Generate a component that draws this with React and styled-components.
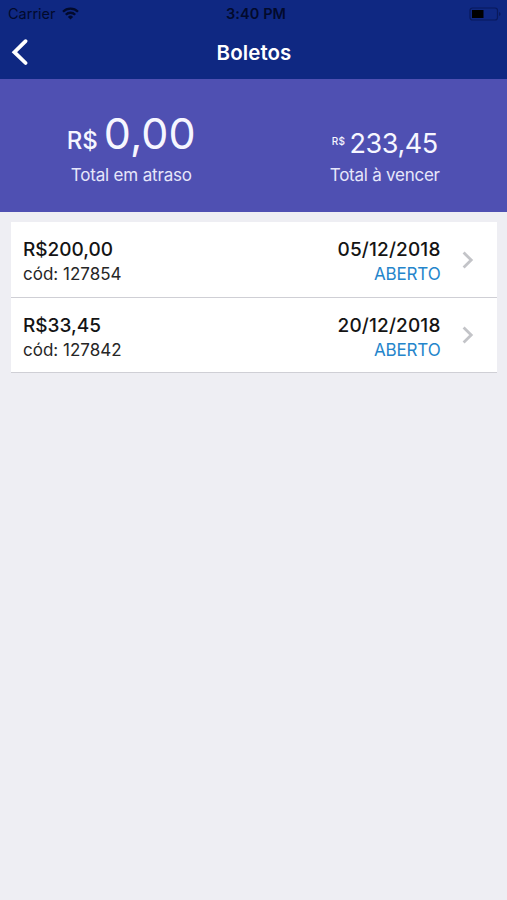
import React from "react";
import styled, { createGlobalStyle } from "styled-components";

const boletos = [
  { id: 1, valor: "R$200,00", codigo: "127854", data: "05/12/2018", status: "ABERTO" },
  { id: 2, valor: "R$33,45", codigo: "127842", data: "20/12/2018", status: "ABERTO" },
];

const App = () => {
  return (
    <Screen>
      <GlobalStyle />
      <Header>
        <StatusBar>
          <Carrier>
            <span>Carrier</span>
            <svg width="17" height="13" viewBox="0 0 17 13">
              <g fill="none" stroke="#020a2c" strokeWidth="2.3">
                <path d="M1 4.7a10.7 10.7 0 0 1 15 0" />
                <path d="M3.8 7.7a6.7 6.7 0 0 1 9.4 0" />
              </g>
              <path d="M8.5 12.5 5.9 9.9a3.7 3.7 0 0 1 5.2 0z" fill="#020a2c" />
            </svg>
          </Carrier>
          <Time>3:40 PM</Time>
          <Battery>
            <svg width="32" height="14" viewBox="0 0 32 14">
              <rect x="1" y="1" width="27.5" height="12" rx="2.5" fill="none" stroke="#09195c" strokeWidth="1.2" />
              <rect x="3" y="3" width="11.5" height="8" fill="#000" />
              <path d="M30 5v4q1.6-.6 1.6-2T30 5z" fill="#09195c" />
            </svg>
          </Battery>
        </StatusBar>
        <NavBar>
          <Back aria-label="Voltar">
            <svg width="18" height="28" viewBox="0 0 18 28">
              <path d="M14.6 3.2 3.4 14.2 14.6 25" fill="none" stroke="#fff" strokeWidth="3.8" strokeLinecap="round" strokeLinejoin="miter" />
            </svg>
          </Back>
          <Title>Boletos</Title>
        </NavBar>
      </Header>
      <Summary>
        <Total>
          <Amount $top="1px">
            <Currency>R$</Currency>
            <Value $size="43px" $weight="390" $spacing="0.1px">0,00</Value>
          </Amount>
          <Label $spacing="-0.17px">Total em atraso</Label>
        </Total>
        <Total>
          <Amount $top="21px">
            <SmallCurrency>R$</SmallCurrency>
            <Value $size="27px" $weight="370" $spacing="-0.4px">233,45</Value>
          </Amount>
          <Label $spacing="-0.25px">Total à vencer</Label>
        </Total>
      </Summary>
      <List>
        {boletos.map((boleto) => (
          <Row key={boleto.id}>
            <Column>
              <Strong $spacing="0px">{boleto.valor}</Strong>
              <Small>cód: {boleto.codigo}</Small>
            </Column>
            <Column $right>
              <Strong $spacing="0.15px">{boleto.data}</Strong>
              <Small $status>{boleto.status}</Small>
            </Column>
            <Arrow width="12" height="18" viewBox="0 0 12 18">
              <path d="M1.6 1.6 9.2 9l-7.6 7.4" fill="none" stroke="#c3c4c8" strokeWidth="2.8" />
            </Arrow>
          </Row>
        ))}
      </List>
    </Screen>
  );
};

const GlobalStyle = createGlobalStyle`
  * {
    box-sizing: border-box;
  }
  body {
    margin: 0;
    background: #eeeef3;
    font-family: Inter, "Liberation Sans", sans-serif;
  }
`;

const Screen = styled.main`
  min-height: 100vh;
  background: #eeeef3;
`;

const Header = styled.header`
  height: 79px;
  background: #0f2882;
`;

const StatusBar = styled.div`
  display: grid;
  grid-template-columns: 1fr auto 1fr;
  align-items: center;
  height: 27px;
  padding: 0 5px 0 8px;
  color: #020a2c;
  font-size: 14.5px;
  line-height: 27px;
`;

const Carrier = styled.div`
  display: flex;
  align-items: center;
  gap: 6px;
`;

const Time = styled.div`
  padding-left: 2px;
  font-weight: 600;
  font-size: 14.5px;
  letter-spacing: 0.1px;
`;

const Battery = styled.div`
  display: flex;
  justify-content: flex-end;
  padding-right: 1px;
`;

const NavBar = styled.nav`
  display: grid;
  grid-template-columns: 60px 1fr 60px;
  align-items: center;
  height: 50px;
`;

const Back = styled.button`
  display: flex;
  width: 40px;
  padding: 0 0 0 11px;
  border: 0;
  background: none;
`;

const Title = styled.h1`
  margin: 0;
  padding: 1px 0 0 1px;
  color: #fff;
  font-size: 20.5px;
  font-weight: 600;
  letter-spacing: 0.1px;
  text-align: center;
`;

const Summary = styled.section`
  display: grid;
  grid-template-columns: 1fr 1fr;
  height: 133px;
  padding: 27px 0 0 6px;
  background: #4f50b2;
  color: #f6f6ff;
`;

const Total = styled.div`
  display: flex;
  flex-direction: column;
  align-items: center;
  &:last-child {
    padding-left: 6px;
  }
`;

const Amount = styled.div`
  display: flex;
  align-items: baseline;
  justify-content: center;
  height: 57px;
  padding-top: ${({ $top }) => $top || 0};
`;

const Currency = styled.span`
  margin-right: 6px;
  font-size: 24px;
  font-weight: 450;
`;

const SmallCurrency = styled.sup`
  align-self: flex-start;
  margin: 8px 4px 0 0;
  font-size: 10px;
  font-weight: 500;
  line-height: 12px;
  letter-spacing: 0.4px;
`;

const Value = styled.span`
  font-size: ${({ $size }) => $size};
  font-weight: ${({ $weight }) => $weight};
  letter-spacing: ${({ $spacing }) => $spacing};
`;

const Label = styled.span`
  color: #e6e6fa;
  font-size: 17px;
  line-height: 24px;
  letter-spacing: ${({ $spacing }) => $spacing};
`;

const List = styled.section`
  padding: 10px 10px 0 11px;
`;

const Row = styled.article`
  display: flex;
  align-items: flex-start;
  height: 75.5px;
  padding: 15px 23px 0 12px;
  background: #fff;
  border-bottom: 1px solid #cfcfd5;
`;

const Column = styled.div`
  display: flex;
  flex-direction: column;
  align-items: ${({ $right }) => ($right ? "flex-end" : "flex-start")};
  margin-left: ${({ $right }) => ($right ? "auto" : "0")};
`;

const Strong = styled.strong`
  color: #141414;
  font-size: 19px;
  font-weight: 550;
  line-height: 25px;
  letter-spacing: ${({ $spacing }) => $spacing};
`;

const Small = styled.span`
  color: ${({ $status }) => ($status ? "#2585cb" : "#262626")};
  font-size: 17px;
  line-height: 24px;
  letter-spacing: ${({ $status }) => ($status ? "-0.15px" : "0")};
`;

const Arrow = styled.svg`
  margin: 13.5px 0 0 21.5px;
`;

export default App;
